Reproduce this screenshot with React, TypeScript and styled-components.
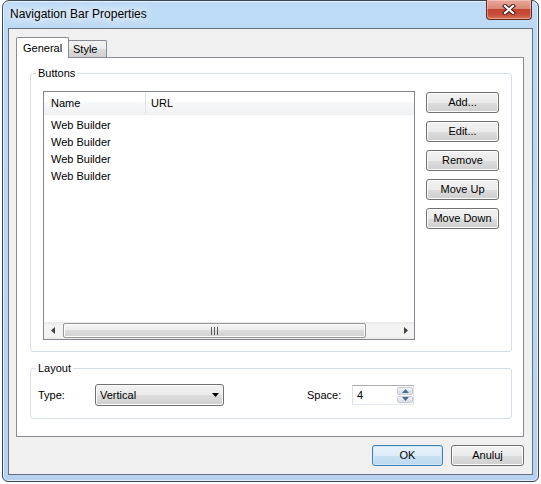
import React from "react";
import styled, { createGlobalStyle } from "styled-components";

const GlobalStyle = createGlobalStyle`
  html, body { margin: 0; padding: 0; background: #ffffff; }
  body {
    font-family: "Liberation Sans", Arial, sans-serif;
    font-size: 11px;
    color: #000;
  }
  * { box-sizing: border-box; }
`;

const Window = styled.div`
  width: 537px;
  height: 482px;
  margin-left: 2px;
  border: 1px solid #3a4656;
  border-radius: 7px 7px 6px 6px;
  background: linear-gradient(to bottom, #bddbf6 0%, #b9d6f2 60%, #b6d2ee 100%);
  box-shadow: inset 0 0 0 1px rgba(255, 255, 255, 0.6);
  display: flex;
  flex-direction: column;
  padding: 0 5px 6px;
`;

const TitleBar = styled.div`
  height: 27px;
  display: flex;
  align-items: flex-start;
  justify-content: space-between;
`;

const TitleText = styled.div`
  margin-top: 6px;
  margin-left: 2px;
  font-size: 12px;
  line-height: 15px;
  color: #000;
  text-shadow: 0 0 8px #ffffff, 0 0 12px #ffffff, 0 0 16px #ffffff;
`;

const CloseButton = styled.div`
  margin-top: -1px;
  margin-right: 1px;
  width: 46px;
  height: 20px;
  border: 1px solid #6a2a24;
  border-top: none;
  border-radius: 0 0 4px 4px;
  background: linear-gradient(
    to bottom,
    #e9a99b 0%,
    #d98876 45%,
    #c2442f 50%,
    #c8513c 80%,
    #d9765f 100%
  );
  box-shadow: inset 0 0 0 1px rgba(255, 220, 210, 0.45);
  display: flex;
  align-items: center;
  justify-content: center;
`;

const Client = styled.div`
  flex: 1;
  border: 1px solid #66717f;
  background: #f0f0f0;
  display: flex;
  flex-direction: column;
  padding: 8px 8px 0 7px;
`;

const TabRow = styled.div`
  height: 20px;
  display: flex;
  align-items: flex-end;
`;

const Tab = styled.div<{ $active?: boolean; $width: number }>`
  position: relative;
  width: ${(p) => p.$width}px;
  height: ${(p) => (p.$active ? 21 : 17)}px;
  margin-bottom: ${(p) => (p.$active ? -1 : 0)}px;
  margin-left: ${(p) => (p.$active ? 0 : -1)}px;
  z-index: ${(p) => (p.$active ? 2 : 1)};
  border: 1px solid #898c95;
  border-bottom: none;
  border-radius: 2px 2px 0 0;
  background: ${(p) =>
    p.$active ? "#ffffff" : "linear-gradient(to bottom, #f3f3f3 0%, #ebebeb 50%, #dddddd 51%, #cfcfcf 100%)"};
  padding: ${(p) => (p.$active ? "0 6px 0" : "0 4px 0")};
  display: flex;
  align-items: center;
  line-height: 13px;
`;

const TabPanel = styled.div`
  position: relative;
  z-index: 1;
  width: 508px;
  height: 380px;
  border: 1px solid #898c95;
  background: #ffffff;
  padding: 9px 11px 0 13px;
`;

const GroupBox = styled.fieldset<{ $gapTop?: number; $pad: string }>`
  margin: ${(p) => p.$gapTop ?? 0}px 0 0 0;
  min-width: 0;
  border: 1px solid #d5dfe5;
  border-radius: 3px;
  padding: ${(p) => p.$pad};
`;

const Legend = styled.legend<{ $shift: number }>`
  margin-left: ${(p) => p.$shift}px;
  padding: 0 2px;
  font-size: 11px;
  line-height: 13px;
  color: #000;
`;

const ButtonsArea = styled.div`
  display: flex;
  align-items: flex-start;
  gap: 11px;
`;

const ListView = styled.div`
  width: 372px;
  height: 249px;
  border: 1px solid #828790;
  background: #ffffff;
  display: flex;
  flex-direction: column;
`;

const Header = styled.div`
  height: 23px;
  display: flex;
  background: linear-gradient(to bottom, #ffffff 0%, #ffffff 45%, #f7f8f9 46%, #f2f3f5 100%);
  border-bottom: 1px solid #eceef0;
`;

const HeaderCell = styled.div<{ $width?: number; $padLeft: number; $divider?: boolean }>`
  ${(p) => (p.$width ? `width: ${p.$width}px;` : "flex: 1;")}
  padding-left: ${(p) => p.$padLeft}px;
  padding-top: 1px;
  border-right: ${(p) => (p.$divider ? "1px solid #e3e4e7" : "none")};
  display: flex;
  align-items: center;
  line-height: 13px;
`;

const ListBody = styled.div`
  flex: 1;
  padding-top: 2px;
`;

const Row = styled.div`
  height: 17px;
  line-height: 17px;
  padding-left: 7px;
  white-space: nowrap;
`;

const HScrollBar = styled.div`
  height: 17px;
  display: flex;
  background: linear-gradient(to bottom, #e9e9e9 0%, #f3f3f3 20%, #f3f3f3 80%, #ececec 100%);
`;

const ScrollArrow = styled.div`
  width: 17px;
  height: 17px;
  display: flex;
  align-items: center;
  justify-content: center;
`;

const ScrollThumb = styled.div<{ $width: number }>`
  width: ${(p) => p.$width}px;
  height: 15px;
  margin: 1px 0 0 2px;
  border: 1px solid #979797;
  border-radius: 2px;
  background: linear-gradient(to bottom, #f6f6f6 0%, #ececec 45%, #dcdcdc 50%, #d2d2d2 100%);
  box-shadow: inset 0 0 0 1px #fbfbfb;
  display: flex;
  align-items: center;
  justify-content: center;
`;

const ScrollTrack = styled.div`
  flex: 1;
`;

const ButtonColumn = styled.div`
  width: 73px;
  margin-top: 1px;
  display: flex;
  flex-direction: column;
  gap: 8px;
`;

const PushButton = styled.div<{ $width?: number; $default?: boolean }>`
  width: ${(p) => p.$width ?? 73}px;
  height: 21px;
  border: 1px solid ${(p) => (p.$default ? "#3c7fb1" : "#707070")};
  border-radius: 3px;
  background: ${(p) =>
    p.$default
      ? "linear-gradient(to bottom, #e8f3fb 0%, #dcecf8 50%, #c8e1f3 51%, #bcd9ee 100%)"
      : "linear-gradient(to bottom, #f2f2f2 0%, #ebebeb 50%, #dddddd 51%, #cfcfcf 100%)"};
  box-shadow: inset 0 0 0 1px ${(p) => (p.$default ? "#cfe8f7" : "#fcfcfc")};
  display: flex;
  align-items: center;
  justify-content: center;
  line-height: 13px;
  white-space: nowrap;
`;

const FieldRow = styled.div`
  display: flex;
  align-items: center;
`;

const FieldLabel = styled.div<{ $width: number; $gapLeft?: number }>`
  width: ${(p) => p.$width}px;
  margin-left: ${(p) => p.$gapLeft ?? 0}px;
  line-height: 13px;
`;

const DropDown = styled.div`
  width: 129px;
  height: 22px;
  border: 1px solid #707070;
  border-radius: 3px;
  background: linear-gradient(to bottom, #f2f2f2 0%, #ebebeb 50%, #dddddd 51%, #cfcfcf 100%);
  box-shadow: inset 0 0 0 1px #fcfcfc;
  display: flex;
  align-items: center;
  justify-content: space-between;
  padding: 0 4px 0 4px;
  line-height: 13px;
`;

const SpinBox = styled.div`
  width: 62px;
  height: 20px;
  border: 1px solid #abadb3;
  border-left-color: #dbdfe6;
  border-right-color: #dbdfe6;
  border-bottom-color: #e3e9ef;
  background: #ffffff;
  display: flex;
  align-items: stretch;
`;

const SpinValue = styled.div`
  flex: 1;
  padding-left: 4px;
  display: flex;
  align-items: center;
  line-height: 13px;
`;

const SpinButtons = styled.div`
  width: 16px;
  display: flex;
  flex-direction: column;
  gap: 1px;
  padding: 1px 0 1px;
`;

const SpinButton = styled.div`
  flex: 1;
  border: 1px solid #c6cad2;
  border-radius: 2px;
  background: linear-gradient(to bottom, #f4f6f9 0%, #e6e9ef 50%, #d9dee6 51%, #e2e6ec 100%);
  display: flex;
  align-items: center;
  justify-content: center;
`;

const BottomBar = styled.div`
  display: flex;
  justify-content: flex-end;
  gap: 8px;
  margin-top: 8px;
`;

const CloseGlyph = () => (
  <svg width="14" height="11" viewBox="0 0 14 11">
    <path d="M3 2 L11 9 M11 2 L3 9" stroke="#4a1f1a" strokeWidth="4.2" strokeLinecap="square" />
    <path d="M3 2 L11 9 M11 2 L3 9" stroke="#ffffff" strokeWidth="2.2" strokeLinecap="square" />
  </svg>
);

const ArrowLeft = () => (
  <svg width="4" height="7" viewBox="0 0 4 7">
    <path d="M4 0 L0 3.5 L4 7 Z" fill="#404040" />
  </svg>
);

const ArrowRight = () => (
  <svg width="4" height="7" viewBox="0 0 4 7">
    <path d="M0 0 L4 3.5 L0 7 Z" fill="#404040" />
  </svg>
);

const Grip = () => (
  <svg width="7" height="8" viewBox="0 0 7 8">
    <path d="M0.5 0 V8 M3.5 0 V8 M6.5 0 V8" stroke="#5a5a5a" strokeWidth="1" />
  </svg>
);

const DropArrow = () => (
  <svg width="7" height="4" viewBox="0 0 7 4">
    <path d="M0 0 H7 L3.5 4 Z" fill="#000000" />
  </svg>
);

const SpinUp = () => (
  <svg width="7" height="4" viewBox="0 0 7 4">
    <path d="M0 4 H7 L3.5 0 Z" fill="#4d6a95" />
  </svg>
);

const SpinDown = () => (
  <svg width="7" height="4" viewBox="0 0 7 4">
    <path d="M0 0 H7 L3.5 4 Z" fill="#4d6a95" />
  </svg>
);

const rows = ["Web Builder", "Web Builder", "Web Builder", "Web Builder"];
const actions = ["Add...", "Edit...", "Remove", "Move Up", "Move Down"];

export default function App() {
  return (
    <>
      <GlobalStyle />
      <Window>
        <TitleBar>
          <TitleText>Navigation Bar Properties</TitleText>
          <CloseButton>
            <CloseGlyph />
          </CloseButton>
        </TitleBar>
        <Client>
          <TabRow>
            <Tab $active $width={53}>General</Tab>
            <Tab $width={39}>Style</Tab>
          </TabRow>
          <TabPanel>
            <GroupBox $pad="11px 11px 11px 12px">
              <Legend $shift={-7}>Buttons</Legend>
              <ButtonsArea>
                <ListView>
                  <Header>
                    <HeaderCell $width={102} $padLeft={7} $divider>Name</HeaderCell>
                    <HeaderCell $padLeft={5}>URL</HeaderCell>
                  </Header>
                  <ListBody>
                    {rows.map((r, i) => (
                      <Row key={i}>{r}</Row>
                    ))}
                  </ListBody>
                  <HScrollBar>
                    <ScrollArrow>
                      <ArrowLeft />
                    </ScrollArrow>
                    <ScrollThumb $width={303}>
                      <Grip />
                    </ScrollThumb>
                    <ScrollTrack />
                    <ScrollArrow>
                      <ArrowRight />
                    </ScrollArrow>
                  </HScrollBar>
                </ListView>
                <ButtonColumn>
                  {actions.map((a) => (
                    <PushButton key={a}>{a}</PushButton>
                  ))}
                </ButtonColumn>
              </ButtonsArea>
            </GroupBox>
            <GroupBox $gapTop={10} $pad="9px 7px 12px 7px">
              <Legend $shift={-2}>Layout</Legend>
              <FieldRow>
                <FieldLabel $width={57}>Type:</FieldLabel>
                <DropDown>
                  <span>Vertical</span>
                  <DropArrow />
                </DropDown>
                <FieldLabel $width={45} $gapLeft={83}>Space:</FieldLabel>
                <SpinBox>
                  <SpinValue>4</SpinValue>
                  <SpinButtons>
                    <SpinButton>
                      <SpinUp />
                    </SpinButton>
                    <SpinButton>
                      <SpinDown />
                    </SpinButton>
                  </SpinButtons>
                </SpinBox>
              </FieldRow>
            </GroupBox>
          </TabPanel>
          <BottomBar>
            <PushButton $width={71} $default>OK</PushButton>
            <PushButton $width={73}>Anuluj</PushButton>
          </BottomBar>
        </Client>
      </Window>
    </>
  );
}
